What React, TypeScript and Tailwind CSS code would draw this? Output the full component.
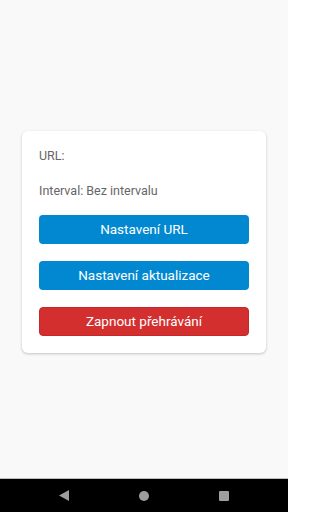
export default function App() {
  return (
    <div
      className="flex h-[512px] w-[288px] flex-col bg-[#f9f9f9]"
      style={{ fontFamily: "Roboto, 'Liberation Sans', sans-serif" }}
    >
      <main className="flex flex-1 flex-col items-center justify-center pt-[5px]">
        <div className="w-[244px] rounded-[6px] bg-white px-[17px] py-[17px] shadow-[0_1px_3px_rgba(0,0,0,0.22)]">
          <p className="text-[12.5px] leading-[16px] text-[#666]">URL:</p>
          <p className="mt-[19px] text-[12.5px] leading-[16px] text-[#666]">Interval: Bez intervalu</p>
          <div className="mt-[16px] flex flex-col gap-[17px]">
            <button className="h-[29px] w-full rounded-[4px] bg-[#0288d1] text-[13.5px] text-white">
              Nastavení URL
            </button>
            <button className="h-[29px] w-full rounded-[4px] bg-[#0288d1] text-[13.5px] text-white">
              Nastavení aktualizace
            </button>
            <button className="h-[29px] w-full rounded-[4px] border border-[#c62828] bg-[#d32f2f] text-[13.5px] text-white">
              Zapnout přehrávání
            </button>
          </div>
        </div>
      </main>
      <nav className="flex h-[34px] items-center justify-center gap-[70px] border-t border-[#bdbdbd] bg-black">
        <svg width="10" height="11" viewBox="0 0 10 11">
          <path d="M10 0 L10 11 L0 5.5 Z" fill="#9e9e9e" />
        </svg>
        <span className="h-[10px] w-[10px] rounded-full bg-[#9e9e9e]" />
        <span className="h-[10px] w-[10px] rounded-[1px] bg-[#9e9e9e]" />
      </nav>
    </div>
  );
}
